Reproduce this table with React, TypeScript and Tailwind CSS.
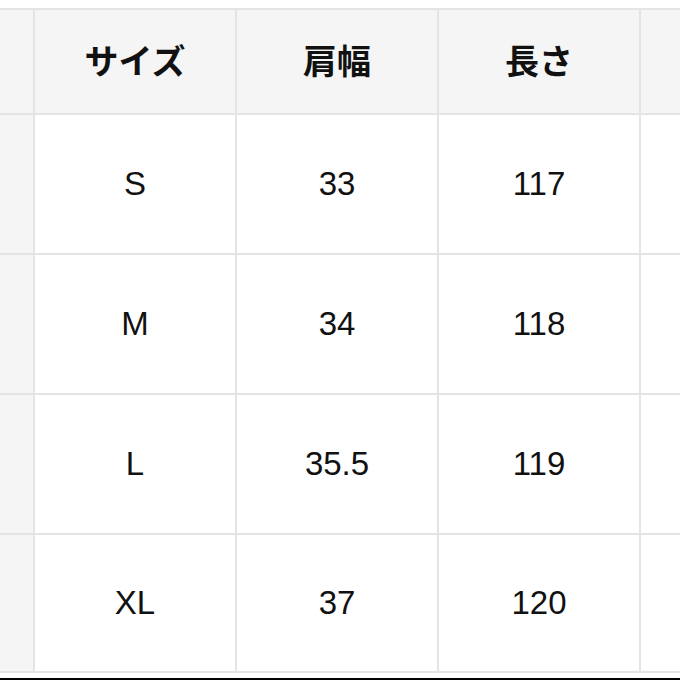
import { Fragment } from "react";

const head = ["サイズ", "肩幅", "長さ"];

const rows = [
  ["S", "33", "117"],
  ["M", "34", "118"],
  ["L", "35.5", "119"],
  ["XL", "37", "120"],
];

export default function App() {
  return (
    <div className="w-[680px] h-[680px] overflow-hidden bg-white flex flex-col">
      <div className="h-[8px] shrink-0 bg-white" />
      <div
        className="grid grid-cols-[33px_200px_200px_200px_1fr] grid-rows-[103px_138px_138px_138px_136px] gap-[2px] bg-[#e4e4e4] py-[2px] text-[#111111]"
        style={{ fontFamily: '"Liberation Sans", Arial, "Noto Sans CJK JP", sans-serif' }}
      >
        <div className="bg-[#f5f5f5]" />
        {head.map((h) => (
          <div
            key={h}
            className="bg-[#f5f5f5] flex items-center justify-center pb-[4px] text-[34px] font-bold"
            style={{ fontFamily: '"Noto Sans CJK JP", sans-serif' }}
          >
            {h}
          </div>
        ))}
        <div className="bg-[#f5f5f5]" />
        {rows.map((r) => (
          <Fragment key={r[0]}>
            <div className="bg-[#f5f5f5]" />
            {r.map((c, i) => (
              <div
                key={i}
                className="bg-white flex items-center justify-center text-[33px]"
              >
                {c}
              </div>
            ))}
            <div className="bg-white" />
          </Fragment>
        ))}
      </div>
      <div className="flex-1 bg-white" />
      <div className="h-[2px] shrink-0 bg-black" />
    </div>
  );
}
